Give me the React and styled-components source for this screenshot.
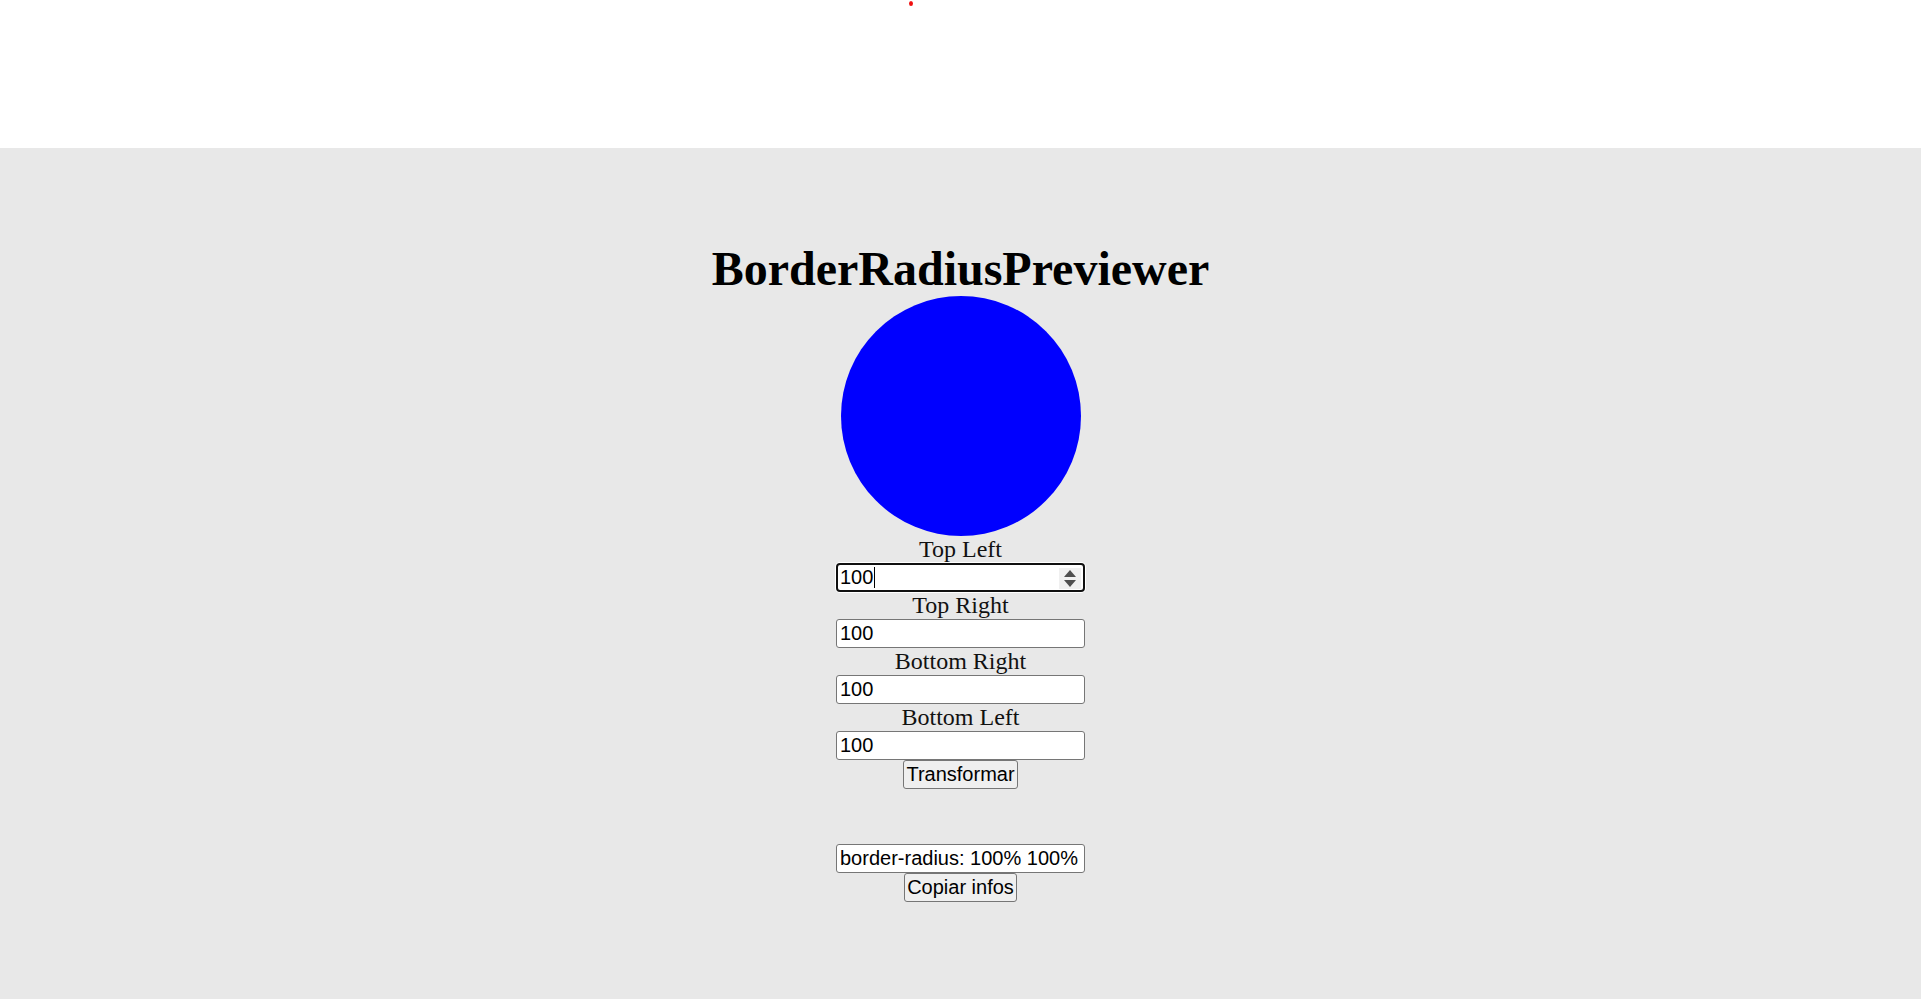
import React, { useState } from 'react';
import styled, { createGlobalStyle } from 'styled-components';

const GlobalStyle = createGlobalStyle`
  html, body {
    margin: 0;
    padding: 0;
    background: white;
    font-family: "Liberation Serif", "Times New Roman", serif;
  }
`;

const corners = [
  { key: 'tl', label: 'Top Left' },
  { key: 'tr', label: 'Top Right' },
  { key: 'br', label: 'Bottom Right' },
  { key: 'bl', label: 'Bottom Left' }
];

export default function App() {
  const [values, setValues] = useState({ tl: 100, tr: 100, br: 100, bl: 100 });
  const [radius, setRadius] = useState('100% 100% 100% 100%');

  function change(key, value) {
    setValues({ ...values, [key]: value });
  }

  function step(key, delta) {
    setValues({ ...values, [key]: Number(values[key]) + delta });
  }

  function transform() {
    setRadius(`${values.tl}% ${values.tr}% ${values.br}% ${values.bl}%`);
  }

  function copy() {
    if (navigator.clipboard) navigator.clipboard.writeText(`border-radius: ${radius}`);
  }

  return (
    <Page>
      <GlobalStyle />
      <Header>
        <Dot />
      </Header>
      <Main>
        <Title>BorderRadiusPreviewer</Title>
        <Shape style={{ borderRadius: radius }} />
        <Form>
          {corners.map((c, i) => (
            <Field key={c.key}>
              <Label htmlFor={c.key}>{c.label}</Label>
              <InputWrap>
                <NumberInput
                  id={c.key}
                  type="number"
                  value={values[c.key]}
                  $focused={i === 0}
                  onChange={e => change(c.key, e.target.value)}
                />
                {i === 0 && (
                  <>
                    <Caret style={{ left: `${5 + String(values[c.key]).length * 11.1}px` }} />
                    <Spinner>
                      <SpinArrow onClick={() => step(c.key, 1)}>
                        <svg width="12" height="7" viewBox="0 0 12 7">
                          <path d="M6 0 L12 7 L0 7 Z" fill="#4f4f4f" />
                        </svg>
                      </SpinArrow>
                      <SpinArrow onClick={() => step(c.key, -1)}>
                        <svg width="12" height="7" viewBox="0 0 12 7">
                          <path d="M0 0 L12 0 L6 7 Z" fill="#4f4f4f" />
                        </svg>
                      </SpinArrow>
                    </Spinner>
                  </>
                )}
              </InputWrap>
            </Field>
          ))}
          <Button onClick={transform}>Transformar</Button>
        </Form>
        <Result>
          <ResultInput readOnly value={`border-radius: ${radius}`} />
          <Button onClick={copy}>Copiar infos</Button>
        </Result>
      </Main>
    </Page>
  );
}

const Page = styled.div`
  min-height: 100vh;
  display: flex;
  flex-direction: column;
`;

const Header = styled.header`
  height: 148px;
  background: white;
  display: flex;
  align-items: flex-start;
`;

const Dot = styled.span`
  width: 4px;
  height: 5px;
  margin: 1px 0 0 909px;
  border-radius: 50%;
  background: #f01010;
`;

const Main = styled.main`
  flex: 1;
  background: #e8e8e8;
  padding-top: 93px;
  display: flex;
  flex-direction: column;
  align-items: center;
`;

const Title = styled.h1`
  margin: 0;
  font-size: 48px;
  font-weight: bold;
  color: black;
`;

const Shape = styled.div`
  width: 240px;
  height: 240px;
  background: blue;
`;

const Form = styled.div`
  display: flex;
  flex-direction: column;
  align-items: center;
`;

const Field = styled.div`
  display: flex;
  flex-direction: column;
  align-items: center;
`;

const Label = styled.label`
  font-size: 24px;
  color: #111;
`;

const InputWrap = styled.div`
  position: relative;
  display: flex;
`;

const InputBase = styled.input`
  box-sizing: border-box;
  width: 249px;
  height: 29px;
  font-family: "Liberation Sans", Arial, sans-serif;
  font-size: 20px;
  padding: 1px 3px;
  color: black;
  background: white;
  border: 1px solid #767676;
  border-radius: 3px;
  outline: none;
`;

const NumberInput = styled(InputBase)`
  -moz-appearance: textfield;
  &::-webkit-inner-spin-button,
  &::-webkit-outer-spin-button {
    -webkit-appearance: none;
    margin: 0;
  }
  ${({ $focused }) => $focused && `
    border: 2px solid #101010;
    border-radius: 4px;
    padding-left: 2px;
    box-shadow: 0 0 0 1px white;
  `}
`;

const Caret = styled.span`
  position: absolute;
  top: 4px;
  width: 1px;
  height: 21px;
  background: black;
`;

const Spinner = styled.div`
  position: absolute;
  top: 5px;
  right: 4px;
  width: 22px;
  height: 21px;
  background: #f0f0f0;
  display: flex;
  flex-direction: column;
  align-items: center;
  justify-content: center;
  gap: 3px;
`;

const SpinArrow = styled.span`
  display: flex;
  cursor: default;
`;

const ResultInput = styled(InputBase)``;

const Result = styled.div`
  margin-top: 55px;
  display: flex;
  flex-direction: column;
  align-items: center;
`;

const Button = styled.button`
  box-sizing: border-box;
  height: 29px;
  font-family: "Liberation Sans", Arial, sans-serif;
  font-size: 20px;
  padding: 1px 2px;
  color: black;
  background: #efefef;
  border: 1px solid #767676;
  border-radius: 3px;
`;
